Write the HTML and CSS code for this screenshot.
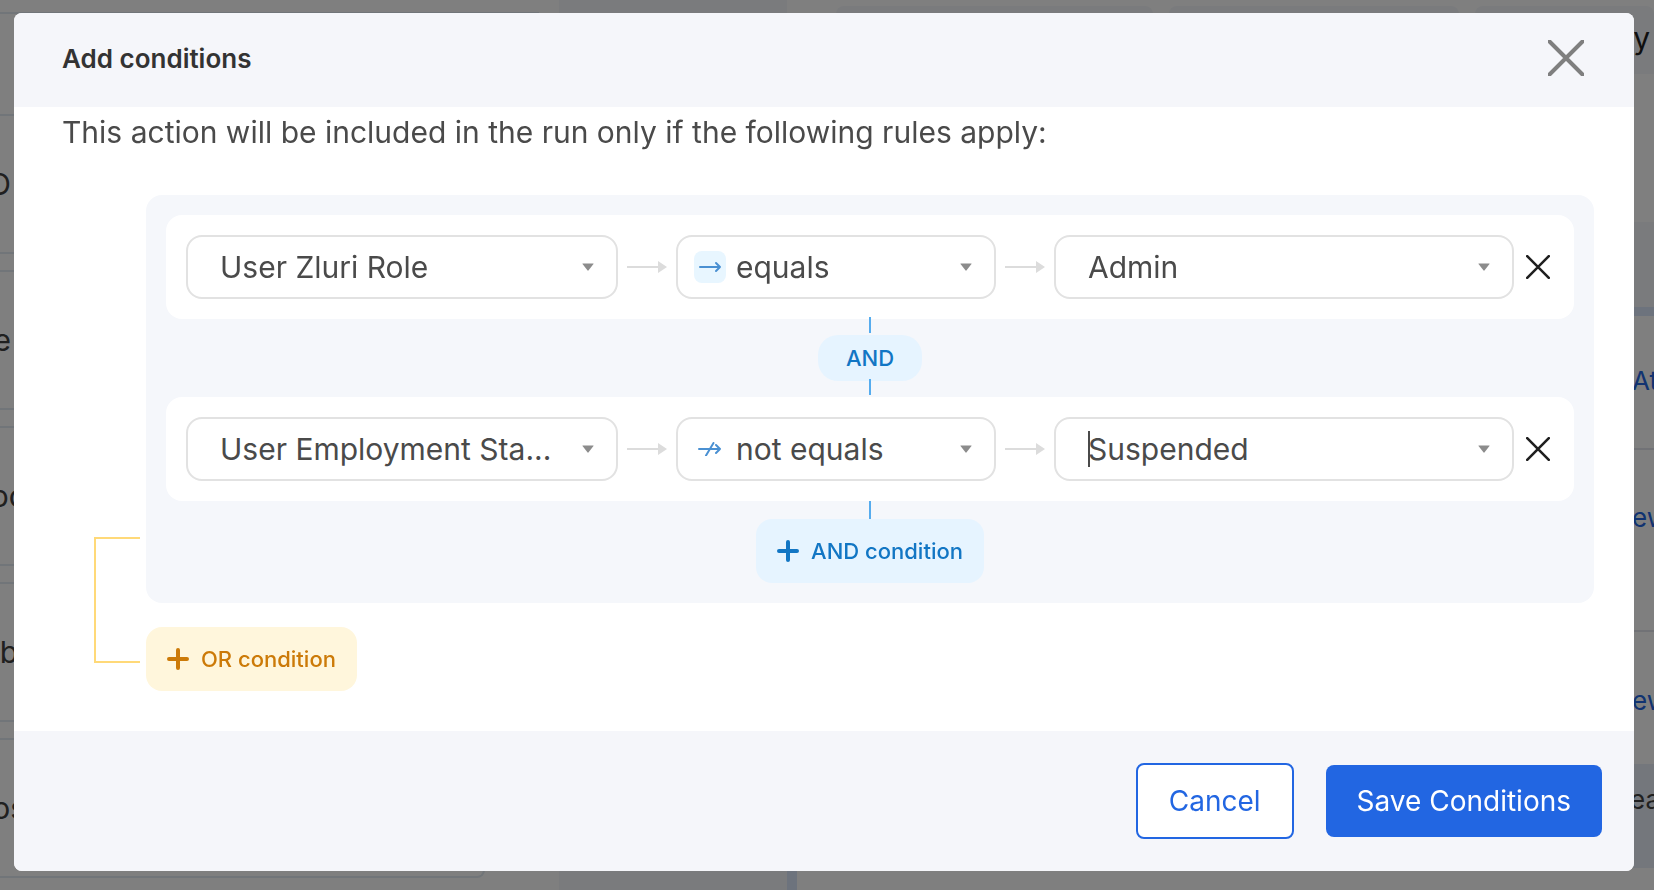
FILE: index.html
```html
<!DOCTYPE html>
<html lang="en">
<head>
<meta charset="utf-8">
<meta name="viewport" content="width=device-width, initial-scale=1">
<title>Add conditions</title>
<link rel="stylesheet" href="styles.css">
</head>
<body>
<div class="page" aria-hidden="true">
  <div class="sidebar">
    <div class="sidebar-top"></div>
    <div class="card"><span class="card-label short">O</span></div>
    <div class="card"><span class="card-label short">e</span></div>
    <div class="card"><span class="card-label long">oc</span></div>
    <div class="card"><span class="card-label mid">b</span></div>
    <div class="card"><span class="card-label long">os</span></div>
  </div>
  <div class="panel"></div>
  <div class="rail"></div>
  <div class="content">
    <div class="tabs"><span class="tab"></span><span class="tab"></span><span class="tab tab-last">y</span></div>
    <div class="band"></div>
    <div class="entry entry-first"><span class="link">At</span></div>
    <div class="entry"><span class="link">ew</span></div>
    <div class="entry entry-last"><span class="link">ew</span></div>
    <div class="note">ea</div>
  </div>
</div>

<div class="overlay">
  <section class="modal" role="dialog" aria-modal="true" aria-labelledby="title">
    <header class="modal-header">
      <h1 class="modal-title" id="title">Add conditions</h1>
      <button class="icon-button close" type="button" aria-label="Close">
        <svg width="36" height="36" viewBox="0 0 36 36"><path d="M1.5 1.5 34.5 34.5M34.5 1.5 1.5 34.5" stroke="#7f7f7f" stroke-width="4" stroke-linecap="round"/></svg>
      </button>
    </header>

    <div class="modal-body">
      <p class="intro">This action will be included in the run only if the following rules apply:</p>
      <div class="rules">
        <div class="group">
          <div class="rule">
            <div class="field">
              <select class="select" aria-label="Field"><option>User Zluri Role</option></select>
              <svg class="caret" width="12" height="8" viewBox="0 0 12 8"><path d="M.8.5h10.4q.7 0 .3.6L6.6 7.3q-.6.7-1.2 0L.5 1.1Q.1.5.8.5z"/></svg>
            </div>
            <svg class="arrow" width="40" height="12" viewBox="0 0 40 12"><path d="M0 5h31V0l9 6-9 6V7H0z"/></svg>
            <div class="field field-operator">
              <span class="operator-icon tinted"><svg width="24" height="14" viewBox="0 0 24 14"><path d="M2 7h20M18 3l4 4-4 4"/></svg></span>
              <select class="select" aria-label="Operator"><option>equals</option></select>
              <svg class="caret" width="12" height="8" viewBox="0 0 12 8"><path d="M.8.5h10.4q.7 0 .3.6L6.6 7.3q-.6.7-1.2 0L.5 1.1Q.1.5.8.5z"/></svg>
            </div>
            <svg class="arrow" width="40" height="12" viewBox="0 0 40 12"><path d="M0 5h31V0l9 6-9 6V7H0z"/></svg>
            <div class="field">
              <select class="select" aria-label="Value"><option>Admin</option></select>
              <svg class="caret" width="12" height="8" viewBox="0 0 12 8"><path d="M.8.5h10.4q.7 0 .3.6L6.6 7.3q-.6.7-1.2 0L.5 1.1Q.1.5.8.5z"/></svg>
            </div>
            <button class="icon-button remove" type="button" aria-label="Remove rule">
              <svg width="24" height="24" viewBox="0 0 24 24"><path d="M1.2 1.2 22.8 22.8M22.8 1.2 1.2 22.8" stroke="#1f1f1f" stroke-width="2.6" stroke-linecap="round"/></svg>
            </button>
          </div>

          <div class="joiner"><span class="pill">AND</span></div>

          <div class="rule">
            <div class="field">
              <select class="select" aria-label="Field"><option>User Employment Sta...</option></select>
              <svg class="caret" width="12" height="8" viewBox="0 0 12 8"><path d="M.8.5h10.4q.7 0 .3.6L6.6 7.3q-.6.7-1.2 0L.5 1.1Q.1.5.8.5z"/></svg>
            </div>
            <svg class="arrow" width="40" height="12" viewBox="0 0 40 12"><path d="M0 5h31V0l9 6-9 6V7H0z"/></svg>
            <div class="field field-operator">
              <span class="operator-icon"><svg width="24" height="14" viewBox="0 0 24 14"><path d="M1 7h21M18 3l4 4-4 4M15.500 1 8 13.500"/></svg></span>
              <select class="select" aria-label="Operator"><option>not equals</option></select>
              <svg class="caret" width="12" height="8" viewBox="0 0 12 8"><path d="M.8.5h10.4q.7 0 .3.6L6.6 7.3q-.6.7-1.2 0L.5 1.1Q.1.5.8.5z"/></svg>
            </div>
            <svg class="arrow" width="40" height="12" viewBox="0 0 40 12"><path d="M0 5h31V0l9 6-9 6V7H0z"/></svg>
            <div class="field">
              <span class="cursor"></span>
              <select class="select" aria-label="Value"><option>Suspended</option></select>
              <svg class="caret" width="12" height="8" viewBox="0 0 12 8"><path d="M.8.5h10.4q.7 0 .3.6L6.6 7.3q-.6.7-1.2 0L.5 1.1Q.1.5.8.5z"/></svg>
            </div>
            <button class="icon-button remove" type="button" aria-label="Remove rule">
              <svg width="24" height="24" viewBox="0 0 24 24"><path d="M1.2 1.2 22.8 22.8M22.8 1.2 1.2 22.8" stroke="#1f1f1f" stroke-width="2.6" stroke-linecap="round"/></svg>
            </button>
          </div>

          <span class="stem"></span>
          <button class="add add-and" type="button">
            <svg width="22" height="22" viewBox="0 0 22 22"><path d="M11 2v18M2 11h18"/></svg>AND condition
          </button>
        </div>

        <div class="or-row">
          <span class="bracket"></span>
          <button class="add add-or" type="button">
            <svg width="22" height="22" viewBox="0 0 22 22"><path d="M11 2v18M2 11h18"/></svg>OR condition
          </button>
        </div>
      </div>
    </div>

    <footer class="modal-footer">
      <button class="button button-outline" type="button">Cancel</button>
      <button class="button button-primary" type="button">Save Conditions</button>
    </footer>
  </section>
</div>
</body>
</html>
```
FILE: styles.css
```css
* { box-sizing: border-box; }

body {
  margin: 0;
  min-height: 100vh;
  overflow: hidden;
  background: #fff;
  color: #4a4a4a;
  font-family: Inter, "Liberation Sans", sans-serif;
  font-size: 30px;
}

button, select { font: inherit; }
svg { display: block; flex: none; fill: none; }

/* Page behind the dialog */
.page { display: flex; height: 100vh; overflow: hidden; color: #404040; }
.sidebar { display: flex; flex-direction: column; gap: 16px; width: 559px; flex: none; }
.sidebar-top { height: 14px; margin: 0 20px 84px 0; border-bottom: 2px solid #e2eaf2; flex: none; }
.card {
  display: flex;
  align-items: center;
  flex: none;
  height: 140px;
  margin-right: 74px;
  border: 2px solid #e2eaf2;
  border-left: 0;
  border-radius: 0 8px 8px 0;
}
.card-label { display: flex; justify-content: flex-end; }
.short { width: 11px; }
.mid { width: 18px; }
.long { width: 26px; }
.panel { width: 228px; flex: none; background: #f4f6fa; }
.rail { width: 10px; margin-top: 315px; flex: none; background: #dbe6fb; }
.content { display: flex; flex-direction: column; flex: 1; min-width: 0; }
.tabs { display: flex; gap: 16px; height: 68px; margin: 6px 0 148px 39px; flex: none; }
.tab { flex: 316; border-radius: 8px 8px 0 0; background: #f4f6fa; }
.tab + .tab { flex-grow: 290; }
.tab + .tab-last {
  flex: none;
  width: 179px;
  padding: 14px 4px 0 0;
  color: #1f1f1f;
  text-align: right;
}
.band { height: 94px; border-bottom: 9px solid #dbe6fb; background: #f4f6fa; flex: none; }
.entry {
  display: flex;
  align-items: center;
  justify-content: flex-end;
  height: 182px;
  padding-bottom: 46px;
  border-bottom: 2px solid #e2e5ec;
  font-size: 26px;
  flex: none;
}
.entry-first { height: 134px; padding-bottom: 4px; }
.entry-last { height: 132px; padding: 4px 0 0; border: 0; }
.link { width: 22px; color: #2266e2; }
.note {
  height: 104px;
  padding: 20px 0 0 calc(100% - 24px);
  background: #e8eef8;
  font-size: 26px;
  flex: none;
}

/* Dialog */
.overlay {
  position: fixed;
  inset: 0;
  display: flex;
  padding: 13px 20px 19px 14px;
  overflow: auto;
  background: rgb(0 0 0 / 50%);
}
.modal {
  display: flex;
  flex: 1;
  flex-direction: column;
  overflow: hidden;
  border-radius: 8px;
  background: #fff;
}
.modal-header {
  display: flex;
  align-items: flex-start;
  justify-content: space-between;
  padding: 27px 50px 29px 48px;
  background: #f5f6fa;
}
.modal-title { margin: 0; color: #333; font-size: 26px; font-weight: 600; line-height: 38px; }
.icon-button { padding: 0; border: 0; background: none; cursor: pointer; }
.modal-body { flex: 1; padding: 8px 40px 40px 48px; }
.intro { margin: 0 0 46px; line-height: 34px; }
.rules { display: flex; flex-direction: column; gap: 24px; margin-left: 84px; }
.group {
  display: flex;
  flex-direction: column;
  align-items: center;
  padding: 20px;
  border-radius: 16px;
  background: #f5f7fb;
}
.rule {
  display: grid;
  grid-template-columns: 432fr auto 320fr auto 460fr auto;
  align-items: center;
  align-self: stretch;
  padding: 20px 24px 20px 20px;
  border-radius: 16px;
  background: #fff;
}
.field {
  position: relative;
  display: flex;
  align-items: center;
  height: 64px;
  min-width: 0;
  border: 2px solid #e2e2e2;
  border-radius: 16px;
  background: #fff;
}
.field-operator { padding-left: 16px; }
.select {
  flex: 1;
  min-width: 0;
  height: 60px;
  padding: 0 48px 0 32px;
  appearance: none;
  border: 0;
  border-radius: 16px;
  background: transparent;
  color: #4a4a4a;
}
.field-operator .select { padding-left: 10px; }
.caret { position: absolute; right: 22px; fill: #8c8c8c; pointer-events: none; }
.cursor { position: absolute; left: 32px; width: 2px; height: 36px; background: #4a4a4a; }
.arrow { margin: 0 9px; fill: #dcdcdc; }
.operator-icon {
  display: grid;
  place-items: center;
  flex: none;
  width: 32px;
  height: 32px;
  border-radius: 8px;
}
.operator-icon svg { stroke: #4a90d2; stroke-width: 2; stroke-linecap: round; stroke-linejoin: round; }
.tinted { background: #e8f6ff; }
.remove { margin-left: 12px; }

.joiner { display: flex; flex-direction: column; align-items: center; margin: -2px 0 2px; }
.joiner::before, .joiner::after { content: ""; width: 2px; height: 16px; background: #56acee; }
.joiner::after { margin-top: -2px; }
.pill {
  min-width: 104px;
  margin-top: 2px;
  border-radius: 20px;
  background: #e6f4ff;
  color: #1276c4;
  font-size: 22px;
  font-weight: 500;
  line-height: 46px;
  text-align: center;
}
.stem { width: 2px; height: 18px; background: #56acee; }
.add {
  display: flex;
  align-items: center;
  gap: 12px;
  height: 64px;
  padding: 0 21px;
  border: 0;
  border-radius: 16px;
  font-size: 22px;
  font-weight: 500;
  cursor: pointer;
}
.add svg { stroke: currentColor; stroke-width: 4; stroke-linecap: round; }
.add-and { background: #e6f4ff; color: #1276c4; }
.add-or { background: #fff6dc; color: #cc7a08; }
.or-row { position: relative; display: flex; }
.bracket {
  position: absolute;
  right: calc(100% + 6px);
  bottom: 28px;
  width: 46px;
  height: 126px;
  border: 2px solid #ffd978;
  border-right: 0;
}

.modal-footer {
  display: flex;
  align-items: center;
  justify-content: flex-end;
  gap: 32px;
  padding: 32px;
  background: #f5f6fa;
}
.button { height: 72px; padding: 0 31px; border: 0; border-radius: 8px; font-size: 28px; cursor: pointer; }
.button-outline { height: 76px; border: 2px solid #2266e2; background: #fff; color: #2266e2; }
.button-primary { background: #2266e2; color: #fff; }
```
